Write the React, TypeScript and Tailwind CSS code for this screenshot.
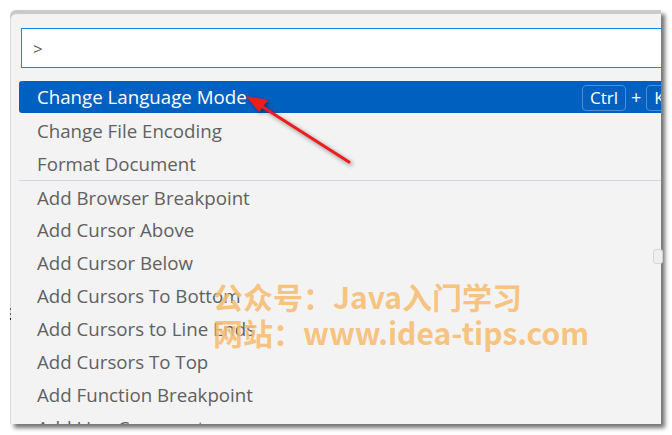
const items = [
  "Change File Encoding",
  "Format Document",
];

const moreItems = [
  "Add Browser Breakpoint",
  "Add Cursor Above",
  "Add Cursor Below",
  "Add Cursors To Bottom",
  "Add Cursors to Line Ends",
  "Add Cursors To Top",
  "Add Function Breakpoint",
  "Add Line Comment",
];

const Row = ({ label, border }: { label: string; border?: boolean }) => (
  <div
    className={
      "flex items-center h-[33px] w-[680px] pl-[18px] pt-[2px] text-[#616161] " +
      (border ? "border-t border-[#d4d4e0]" : "")
    }
  >
    {label}
  </div>
);

export default function App() {
  return (
    <div className="relative w-[672px] h-[435px] overflow-hidden bg-white">
      <div className="pt-[10px] pl-[10px]">
        <div className="w-[651px] h-[414px] flex flex-col bg-[#c9c9c9] pt-[4px] rounded-tl-[6px] shadow-[4px_4px_4px_rgba(0,0,0,0.55)]">
          <div
            className="flex-1 overflow-hidden bg-[#f3f3f3] border-l border-[#d9d9d9] rounded-tl-[6px] text-[18.7px]"
            style={{ fontFamily: '"Open Sans", "Noto Sans", sans-serif' }}
          >
            <div className="ml-[10px] mt-[14px] w-[660px] h-[40px] flex items-center pl-[11px] pt-[2px] bg-white border border-[#0090f1] text-[#616161] text-[17px]">
              &gt;
            </div>
            <div className="ml-[8px] mt-[13px]">
              <div className="flex items-center h-[32px] w-[680px] pl-[18px] pt-[1px] mb-[1px] bg-[#0060c0] text-white rounded-l-[3px]">
                <span className="w-[545px]">Change Language Mode</span>
                <span className="flex items-center h-[26px] px-[7px] rounded-[4px] border border-[#4d8fd6] text-[17px]">
                  Ctrl
                </span>
                <span className="mx-[5px] text-[18px]">+</span>
                <span className="flex items-center h-[26px] px-[7px] rounded-[4px] border border-[#4d8fd6] text-[17px]">
                  K
                </span>
              </div>
              {items.map((it) => (
                <Row key={it} label={it} />
              ))}
              {moreItems.map((it, i) => (
                <Row key={it} label={it} border={i === 0} />
              ))}
            </div>
          </div>
        </div>
      </div>

      {/* scrollbar edge */}
      <div className="absolute left-[653px] top-[249px] w-[10px] h-[15px] rounded-[3px] border border-[#d6d6d6] bg-[#efefef]" />

      {/* stray pixels on left edge */}
      <div className="absolute left-[10px] top-[308px] w-px h-[12px] flex flex-col justify-between">
        <span className="h-[2px] bg-[#6a6a40]" />
        <span className="h-[2px] bg-[#3f7fb0]" />
        <span className="h-[2px] bg-[#222]" />
      </div>

      {/* red arrow */}
      <svg
        className="absolute left-0 top-0 drop-shadow-[2px_2px_2px_rgba(0,0,0,0.45)]"
        width="672"
        height="435"
        viewBox="0 0 672 435"
      >
        <line x1="349" y1="162" x2="258" y2="104" stroke="#ee1c1c" strokeWidth="3" strokeLinecap="round" />
        <polygon points="246,96 268,100 259,112" fill="#ee1c1c" />
      </svg>

      {/* watermark */}
      <div
        className="absolute left-[213px] top-[278px] text-[30px] leading-[36px] font-bold text-[#f7bd70]/90"
        style={{ fontFamily: '"Noto Sans CJK SC", "Noto Sans", sans-serif' }}
      >
        <div>公众号：Java入门学习</div>
        <div>网站：www.idea-tips.com</div>
      </div>
    </div>
  );
}
